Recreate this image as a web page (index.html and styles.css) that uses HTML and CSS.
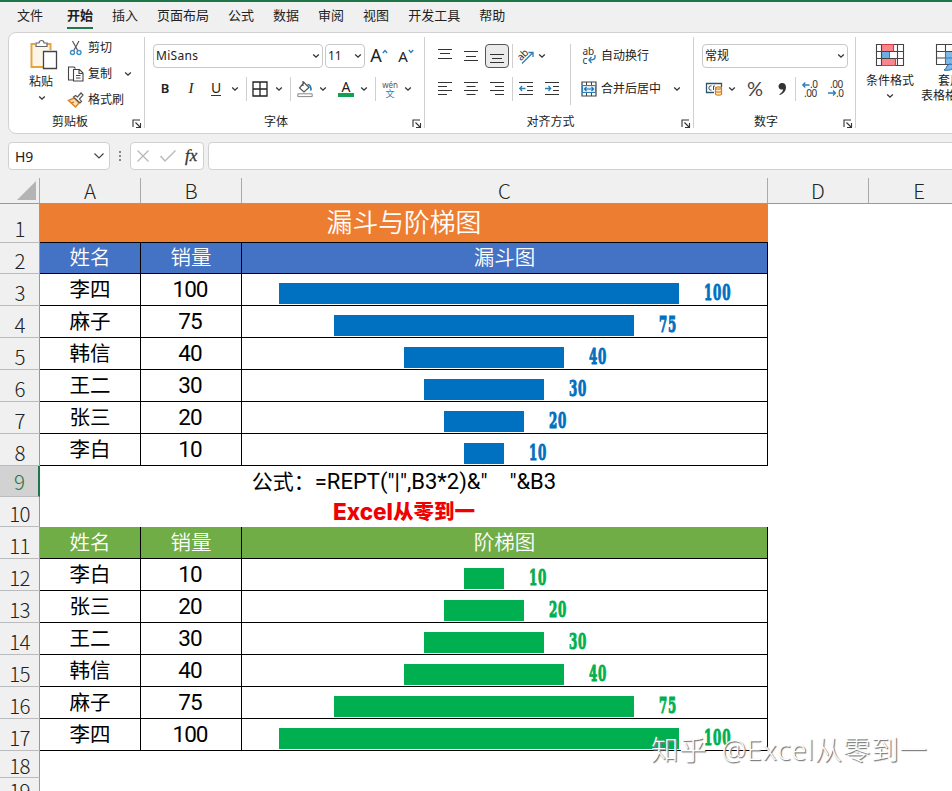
FILE: index.html
```html
<!DOCTYPE html>
<html lang="zh-CN">
<head>
<meta charset="utf-8">
<title>漏斗与阶梯图</title>
<link rel="stylesheet" href="styles.css">
</head>
<body>
<svg class="defs" aria-hidden="true">
  <symbol id="chev" viewBox="0 0 8 6"><path d="M1.2 1.5 4 4.2 6.8 1.5" fill="none" stroke="#333" stroke-width="1.3"/></symbol>
  <symbol id="launch" viewBox="0 0 10 10"><path d="M1 8V1h7M3.5 3.5 8 8M8.5 4v4.5H4" fill="none" stroke="#333" stroke-width="1.1"/></symbol>
</svg>
<div class="app">
  <nav class="tabs">
    <span class="first">文件</span><span class="active">开始</span><span>插入</span><span>页面布局</span><span>公式</span><span>数据</span><span>审阅</span><span>视图</span><span>开发工具</span><span>帮助</span>
  </nav>
  <div class="ribbon">
    <section class="group clip">
      <div class="tools">
        <div class="paste">
          <svg width="30" height="32" viewBox="0 0 30 32"><path d="M4 5h16v6h-6v16H4z" fill="#fdf6e8"/><path d="M6 5H2.500V28H14" fill="none" stroke="#e8a33d" stroke-width="2"/><path d="M18 5h3.500v6" fill="none" stroke="#e8a33d" stroke-width="2"/><path d="M7 7.500V4h3a2.500 2.500 0 0 1 5 0h3v3.500z" fill="#fff" stroke="#666" stroke-width="1.200"/><path d="M14.500 12.500h13v17h-13z" fill="#fff" stroke="#444" stroke-width="1.300"/></svg>
          <span>粘贴</span>
          <svg class="chev"><use href="#chev"/></svg>
        </div>
        <div class="cliplist">
          <div><svg width="18" height="18" viewBox="0 0 18 18"><path d="M5.500 2 11 12M12 2 6.500 12" stroke="#555" stroke-width="1.200"/><g fill="none" stroke="#3b91c8" stroke-width="1.400"><circle cx="5.500" cy="13.500" r="2"/><circle cx="12" cy="13.500" r="2"/></g></svg><span>剪切</span></div>
          <div><svg width="18" height="18" viewBox="0 0 18 18"><path d="M6 15H1.500V2H7l1.500 1.500M6.500 4.500h6l3.500 3.500v8H6.500zM12 4.500V8.500h4M9 10.500h4.500M9 13h4.500" fill="none" stroke="#444" stroke-width="1.100"/></svg><span>复制</span><svg class="chev far"><use href="#chev"/></svg></div>
          <div><svg width="18" height="18" viewBox="0 0 18 18"><path d="M1.500 9.500 7 7l5 5-3.500 4z" fill="#fbe0b8" stroke="#df7f20" stroke-width="1.400"/><path d="m4 12 3-1" stroke="#df7f20" stroke-width="1.400"/><path d="m6.500 6 6.500 6 1.500-1.500-2-2.500L16 4 14 2l-3.500 4L8.500 4.500z" fill="#fff" stroke="#555" stroke-width="1.200"/></svg><span>格式刷</span></div>
        </div>
      </div>
      <div class="caption"><span>剪贴板</span><svg class="launch"><use href="#launch"/></svg></div>
    </section>

    <section class="group font">
      <div class="tools col">
        <div class="line">
          <div class="combo name"><span>MiSans</span><svg class="chev"><use href="#chev"/></svg></div>
          <div class="combo size"><span>11</span><svg class="chev"><use href="#chev"/></svg></div>
          <div class="slot w28 up"><span class="big">A</span><svg width="6" height="5" viewBox="0 0 6 5"><path d="M.8 4 3 1.500 5.200 4" fill="none" stroke="#2b7fb8" stroke-width="1.300"/></svg></div>
          <div class="slot w26 up"><span class="mid">A</span><svg width="6" height="5" viewBox="0 0 6 5"><path d="M.8 1 3 3.500 5.200 1" fill="none" stroke="#2b7fb8" stroke-width="1.300"/></svg></div>
        </div>
        <div class="line">
          <div class="slot w26 b">B</div><div class="slot w26 i">I</div><div class="slot w24 u"><span>U</span></div>
          <div class="slot w14"><svg class="chev"><use href="#chev"/></svg></div>
          <div class="slot w8"><i class="sep"></i></div>
          <div class="slot w20"><svg width="16" height="16" viewBox="0 0 16 16"><path d="M1 1h14v14H1zM8 1v14M1 8h14" fill="none" stroke="#222" stroke-width="1.300"/></svg></div>
          <div class="slot w18"><svg class="chev"><use href="#chev"/></svg></div>
          <div class="slot w4"><i class="sep"></i></div>
          <div class="slot w26"><svg width="16" height="18" viewBox="0 0 16 18"><path d="m7 2.500 5 5-5 4.500L2.500 8zM6 1v5" fill="none" stroke="#555" stroke-width="1.200"/><path d="M10.500 4.500c3 0 3.500 2 3.500 6" fill="none" stroke="#1b75b5" stroke-width="1.600"/><path d="M.8 13.800h14.400v2.800H.8z" fill="#fff" stroke="#888"/></svg></div>
          <div class="slot w10"><svg class="chev"><use href="#chev"/></svg></div>
          <div class="slot w4"></div>
          <div class="slot w28 color"><span>A</span></div>
          <div class="slot w8"><svg class="chev"><use href="#chev"/></svg></div>
          <div class="slot w14"><i class="sep"></i></div>
          <div class="slot w16 wen"><span>wén</span><b>文</b></div>
          <div class="slot w20"><svg class="chev"><use href="#chev"/></svg></div>
        </div>
      </div>
      <div class="caption"><span>字体</span><svg class="launch"><use href="#launch"/></svg></div>
    </section>

    <section class="group align">
      <div class="tools">
        <div class="col left">
          <div class="line">
            <div class="slot w26"><svg width="14" height="14" viewBox="0 0 14 14"><path d="M0 .5h14M2 4.500h10M0 9.500h14" class="ln"/></svg></div>
            <div class="slot w26"><svg width="14" height="14" viewBox="0 0 14 14"><path d="M0 2.500h14M2 7.500h10M0 11.500h14" class="ln"/></svg></div>
            <div class="slot w26"><div class="pressed"><svg width="14" height="14" viewBox="0 0 14 14"><path d="M0 5.500h14M2 9.500h10M0 13.500h14" class="ln"/></svg></div></div>
            <div class="slot w4"><i class="sep"></i></div>
            <div class="slot w24"><svg width="18" height="18" viewBox="0 0 18 18"><text x="0" y="11" transform="rotate(-45 6 8)" class="abr">ab</text><path d="M5 16.500 16 5.500M11.500 5.500H16V10" fill="none" stroke="#2b7fb8" stroke-width="1.300"/></svg></div>
            <div class="slot w8"><svg class="chev"><use href="#chev"/></svg></div>
          </div>
          <div class="line">
            <div class="slot w26"><svg width="14" height="14" viewBox="0 0 14 14"><path d="M0 .5h14M0 4.500h9M0 8.500h14M0 12.500h9" class="ln"/></svg></div>
            <div class="slot w26"><svg width="14" height="14" viewBox="0 0 14 14"><path d="M0 .5h14M2.500 4.500h9M0 8.500h14M2.500 12.500h9" class="ln"/></svg></div>
            <div class="slot w26"><svg width="14" height="14" viewBox="0 0 14 14"><path d="M0 .5h14M5 4.500h9M0 8.500h14M5 12.500h9" class="ln"/></svg></div>
            <div class="slot w4"><i class="sep"></i></div>
            <div class="slot w24"><svg width="15" height="14" viewBox="0 0 15 14"><path d="M0 .5h14M8 4.500h6M8 8.500h6M0 12.500h14" class="ln"/><path d="M6.500 6.500H.8M3 4 .8 6.500 3 9" fill="none" stroke="#2b7fb8" stroke-width="1.300"/></svg></div>
            <div class="slot w28"><svg width="15" height="14" viewBox="0 0 15 14"><path d="M0 .5h14M8 4.500h6M8 8.500h6M0 12.500h14" class="ln"/><path d="M0 6.500h5.700M3.500 4l2.200 2.500L3.500 9" fill="none" stroke="#2b7fb8" stroke-width="1.300"/></svg></div>
          </div>
        </div>
        <i class="sep tall"></i>
        <div class="col wrapcol">
          <div class="line"><svg width="16" height="18" viewBox="0 0 16 18"><text x="1.500" y="8" class="abc">ab</text><text x="1.500" y="16.500" class="abc">c</text><path d="M14 8v2.500c0 2-1.500 2.500-6 2.500M10.500 10 8 13l2.500 3" fill="none" stroke="#2b7fb8" stroke-width="1.400"/></svg><span>自动换行</span></div>
          <div class="line"><svg width="16" height="16" viewBox="0 0 16 16"><path d="M1 1h14v14H1z" fill="#fff" stroke="#444" stroke-width="1.200"/><path d="M1.500 4.500h13v7h-13z" fill="#dceefa" stroke="#2b7fb8"/><path d="M5.500 1v3M10.500 1v3M5.500 12v3M10.500 12v3" stroke="#444"/><path d="M3.500 8h9M5.500 6l-2 2 2 2M10.500 6l2 2-2 2" fill="none" stroke="#1b6ca8" stroke-width="1.100"/></svg><span>合并后居中</span><svg class="chev merge"><use href="#chev"/></svg></div>
        </div>
      </div>
      <div class="caption"><span>对齐方式</span><svg class="launch"><use href="#launch"/></svg></div>
    </section>

    <section class="group number">
      <div class="tools col">
        <div class="line"><div class="combo fmt"><span>常规</span><svg class="chev"><use href="#chev"/></svg></div></div>
        <div class="line">
          <div class="slot w24"><svg width="17" height="14" viewBox="0 0 17 14"><path d="M15.500 5V1.500h-15v9H8" fill="none" stroke="#31556b" stroke-width="1.300"/><path d="M5.500 4H4C2.500 4 2.500 8 4 8h1.500M9 4H7.500v4" fill="none" stroke="#31556b"/><path d="M9.500 6v6c0 1.500 6 1.500 6 0V6c0-1.500-6-1.500-6 0 0 1.500 6 1.500 6 0M9.500 9c0 1.500 6 1.500 6 0" fill="#fdebd0" stroke="#d97a14" stroke-width="1.200"/></svg></div>
          <div class="slot w12"><svg class="chev"><use href="#chev"/></svg></div>
          <div class="slot w34 pct">%</div>
          <div class="slot w20"><svg width="9" height="14" viewBox="0 0 9 14"><path d="M4.300 1a3.300 3.300 0 1 0 .8 6.300C5 9.500 3.500 11 1.300 12.200l.5.900C5.500 11.700 8 9 8 5.200 8 2.500 6.500 1 4.300 1z" fill="#333"/></svg></div>
          <div class="slot w6"><i class="sep"></i></div>
          <div class="slot w24"><svg width="16" height="18" viewBox="0 0 16 18"><text x="8" y="8" class="dec">.0</text><text x="2" y="17" class="dec">.00</text><path d="M7.500 5H.8M3.300 2.500.8 5l2.500 2.500" fill="none" stroke="#2b7fb8" stroke-width="1.300"/></svg></div>
          <div class="slot w28"><svg width="16" height="18" viewBox="0 0 16 18"><text x="2" y="8" class="dec">.00</text><text x="8" y="17" class="dec">.0</text><path d="M0 13h7.500M5 10.500 7.500 13 5 15.500" fill="none" stroke="#2b7fb8" stroke-width="1.300"/></svg></div>
        </div>
      </div>
      <div class="caption"><span>数字</span><svg class="launch"><use href="#launch"/></svg></div>
    </section>

    <section class="styles">
      <div class="bigbtn cond"><svg width="30" height="24" viewBox="0 0 30 24"><path d="M1.500 1.500h27v21h-27z" fill="#fff"/><path d="M6.500 1.500h12v7h-12zM6.500 15.500h14v7h-14z" fill="#f8868c" stroke="#d63a42"/><path d="M6.500 8.500h8v7h-8z" fill="#6bb0e4" stroke="#2b7fb8"/><path d="M1.500 1.500h27v21h-27zM1.500 8.500h27M1.500 15.500h27M6.500 1.500v21M22.500 1.500v21" fill="none" stroke="#444" stroke-width="1.100"/><path d="M6.500 1.500h12v7M6.500 22.500h14v-7" fill="none" stroke="#d63a42" stroke-width="1.200"/></svg><span>条件格式</span><svg class="chev"><use href="#chev"/></svg></div>
      <div class="bigbtn table"><svg width="30" height="28" viewBox="0 0 30 28"><path d="M1.500 1.500h27v20h-27z" fill="#fff"/><path d="M10.500 8.500h18v13h-18z" fill="#7db9e8"/><path d="M1.500 1.500h27v20h-27zM1.500 8.500h27M1.500 15h9M10.500 1.500v20M19.500 1.500v20" fill="none" stroke="#444" stroke-width="1.100"/><path d="M10.500 15h18M10.500 8.500v13" stroke="#2b7fb8"/><path d="M9 27c3-1 2-5 6-6 3 0 4 3 2 5-2 1.500-5 1.500-8 1z" fill="#7db9e8" stroke="#1b6ca8"/></svg><span>套用</span><span>表格格式</span></div>
    </section>
  </div>

  <div class="formula">
    <div class="namebox"><span>H9</span><svg width="12" height="8" viewBox="0 0 12 8"><path d="m1.500 1.500 4.500 4.500 4.500-4.500" fill="none" stroke="#444" stroke-width="1.200"/></svg></div>
    <svg class="dots" width="4" height="14" viewBox="0 0 4 14"><path d="M1 2h2v2H1zM1 6h2v2H1zM1 10h2v2H1z" fill="#888"/></svg>
    <div class="fxbox"><svg width="12" height="12" viewBox="0 0 12 12"><path d="m.5.5 11 11m0-11-11 11" stroke="#b8b8b8" stroke-width="1.300"/></svg><svg width="16" height="12" viewBox="0 0 16 12"><path d="m.5 6 4.500 5L15.500.5" fill="none" stroke="#b8b8b8" stroke-width="1.400"/></svg><span>fx</span></div>
    <div class="input"></div>
  </div>

  <div class="sheet">
    <div class="row head"><div class="corner"><svg width="19" height="19" viewBox="0 0 19 19"><path d="M19 0v19H0z" fill="#b4b4b4"/></svg></div><div>A</div><div>B</div><div>C</div><div>D</div><div>E</div></div>
    <div class="row r1"><div class="num">1</div><div class="title">漏斗与阶梯图</div></div>
    <div class="row r2 blue"><div class="num">2</div><div class="cell">姓名</div><div class="cell">销量</div><div class="cell">漏斗图</div></div>
    <div class="row funnel"><div class="num">3</div><div class="cell">李四</div><div class="cell">100</div><div class="cell chart"><i class="bar" style="width:400px"></i><b class="v3"><span>100</span></b></div></div>
    <div class="row funnel"><div class="num">4</div><div class="cell">麻子</div><div class="cell">75</div><div class="cell chart"><i class="bar" style="width:300px"></i><b><span>75</span></b></div></div>
    <div class="row funnel"><div class="num">5</div><div class="cell">韩信</div><div class="cell">40</div><div class="cell chart"><i class="bar" style="width:160px"></i><b><span>40</span></b></div></div>
    <div class="row funnel"><div class="num">6</div><div class="cell">王二</div><div class="cell">30</div><div class="cell chart"><i class="bar" style="width:120px"></i><b><span>30</span></b></div></div>
    <div class="row funnel"><div class="num">7</div><div class="cell">张三</div><div class="cell">20</div><div class="cell chart"><i class="bar" style="width:80px"></i><b><span>20</span></b></div></div>
    <div class="row funnel"><div class="num">8</div><div class="cell">李白</div><div class="cell">10</div><div class="cell chart"><i class="bar" style="width:40px"></i><b><span>10</span></b></div></div>
    <div class="row r9"><div class="num sel">9</div><div class="merged"><span>公式：</span><span class="code">=REPT("|",B3*2)&amp;"    "&amp;B3</span></div></div>
    <div class="row r10"><div class="num">10</div><div class="merged red"><span class="latin">Excel</span><span>从零到一</span></div></div>
    <div class="row green"><div class="num">11</div><div class="cell">姓名</div><div class="cell">销量</div><div class="cell">阶梯图</div></div>
    <div class="row stair"><div class="num">12</div><div class="cell">李白</div><div class="cell">10</div><div class="cell chart"><i class="bar" style="width:40px"></i><b><span>10</span></b></div></div>
    <div class="row stair"><div class="num">13</div><div class="cell">张三</div><div class="cell">20</div><div class="cell chart"><i class="bar" style="width:80px"></i><b><span>20</span></b></div></div>
    <div class="row stair"><div class="num">14</div><div class="cell">王二</div><div class="cell">30</div><div class="cell chart"><i class="bar" style="width:120px"></i><b><span>30</span></b></div></div>
    <div class="row stair"><div class="num">15</div><div class="cell">韩信</div><div class="cell">40</div><div class="cell chart"><i class="bar" style="width:160px"></i><b><span>40</span></b></div></div>
    <div class="row stair"><div class="num">16</div><div class="cell">麻子</div><div class="cell">75</div><div class="cell chart"><i class="bar" style="width:300px"></i><b><span>75</span></b></div></div>
    <div class="row stair"><div class="num">17</div><div class="cell">李四</div><div class="cell">100</div><div class="cell chart"><i class="bar" style="width:400px"></i><b class="v3"><span>100</span></b></div></div>
    <div class="row r18"><div class="num">18</div></div>
    <div class="row r19"><div class="num">19</div></div>
  </div>
  <div class="watermark">知乎 @Excel从零到一</div>
</div>
</body>
</html>
```
FILE: styles.css
```css
* { box-sizing: border-box; }
body { margin: 0; background: #f0f0f0; font: 12px "Noto Sans", "Noto Sans CJK SC", sans-serif; color: #222; }
svg { display: block; flex: none; overflow: visible; }
.defs { position: absolute; width: 0; height: 0; }
.app { position: relative; width: 952px; height: 791px; overflow: hidden; }

.tabs { display: flex; gap: 19px; height: 32px; padding: 2px 0 0 17px; border-top: 2px solid #1e7548; font-size: 13px; line-height: 23px; white-space: nowrap; }
.tabs span { height: 25px; }
.tabs .first { margin-right: 5px; }
.tabs .active { font-weight: bold; border-bottom: 2px solid #1e7548; }

.ribbon { display: flex; margin-left: 8px; width: 1000px; height: 102px; background: #fff; border: 1px solid #d2d2d2; border-radius: 8px; line-height: 16px; white-space: nowrap; }
.group { display: flex; flex-direction: column; flex: none; height: 91px; margin-top: 4px; border-right: 1px solid #d0d0d0; }
.clip { width: 136px; }
.font { width: 280px; }
.align { width: 269px; }
.number { width: 162px; }
.tools { display: flex; height: 75px; flex: none; }
.col { display: flex; flex-direction: column; gap: 9px; padding-top: 7px; }
.line { display: flex; align-items: center; height: 24px; }
.font .tools { padding-left: 7px; }
.number .tools { padding-left: 8px; }
.caption { display: flex; justify-content: center; height: 16px; position: relative; line-height: 20px; }
.clip .caption { padding-right: 13px; }
.font .caption { padding-right: 17px; }
.align .caption { padding-right: 17px; }
.number .caption { padding-right: 17px; }
.launch { position: absolute; right: 2px; bottom: -1px; width: 10px; height: 10px; }
.chev { width: 8px; height: 6px; }

.paste { display: flex; flex-direction: column; align-items: center; width: 30px; margin-left: 20px; padding-top: 2px; }
.paste span { margin: 3px 6px 5px 0; }
.paste .chev { margin-right: 4px; }
.cliplist { display: flex; flex-direction: column; gap: 8px; padding-top: 2px; margin-left: 8px; }
.cliplist > div { display: flex; align-items: center; height: 18px; gap: 3px; }
.far { margin-left: 9px; }

.combo { display: flex; align-items: center; justify-content: space-between; height: 24px; border: 1px solid #c8c8c8; border-radius: 4px; padding: 0 2px; flex: none; }
.name { width: 170px; margin-left: 1px; letter-spacing: .3px; }
.size { width: 40px; margin-left: 2px; }
.fmt { width: 146px; }
.slot { display: flex; align-items: center; justify-content: center; flex: none; height: 24px; }
.w4 { width: 4px; } .w6 { width: 6px; } .w8 { width: 8px; } .w10 { width: 10px; } .w12 { width: 12px; } .w14 { width: 14px; } .w16 { width: 16px; } .w18 { width: 18px; }
.w20 { width: 20px; } .w24 { width: 24px; } .w26 { width: 26px; } .w28 { width: 28px; } .w34 { width: 34px; }
.sep { width: 1px; height: 24px; background: #d0d0d0; flex: none; }
.tall { height: 61px; margin: 7px 0 0 4px; }
.up { padding-bottom: 2px; }
.up svg { margin-bottom: 8px; }
.big { font-size: 18px; }
.mid { font-size: 15px; padding-top: 2px; }
.b { font-weight: 600; font-size: 13px; padding-bottom: 2px; }
.i { font: italic 15px "Liberation Serif", serif; padding-bottom: 1px; }
.u { font-size: 14px; padding-bottom: 1px; }
.u span { border-bottom: 1px solid #333; line-height: 14px; }
.color { padding-bottom: 1px; }
.color span { width: 16px; border-bottom: 4px solid #12a150; text-align: center; font-size: 14px; line-height: 13px; }
.wen { flex-direction: column; line-height: 8px; font-size: 8px; color: #555; }
.wen b { font-size: 9px; font-weight: normal; color: #2b7fb8; line-height: 9px; }
.ln { fill: none; stroke: #333; stroke-width: 1.1; }
.left { padding-left: 7px; }
.pressed { display: flex; align-items: center; justify-content: center; width: 24px; height: 24px; border: 1px solid #555; border-radius: 4px; background: #ebebeb; }
.abr { font-size: 10px; fill: #333; }
.abc { font-size: 10px; fill: #333; }
.wrapcol { padding-left: 10px; }
.wrapcol span { margin-left: 4px; }
.merge { margin-left: 12px; }
.pct { font: 400 20px Lato, sans-serif; color: #444; padding-bottom: 2px; }
.dec { font-size: 10px; fill: #333; letter-spacing: -.5px; }
.styles { display: flex; padding-top: 10px; }
.bigbtn { display: flex; flex-direction: column; align-items: center; flex: none; }
.cond { margin-left: 10px; width: 48px; }
.cond span { margin: 6px 0 4px; }
.table { margin-left: 7px; width: 58px; line-height: 15px; }
.table svg { margin-bottom: 2px; }
.table span:last-child { align-self: flex-start; }

.formula { display: flex; align-items: center; height: 44px; padding-left: 8px; }
.formula > div { display: flex; align-items: center; flex: none; height: 28px; background: #fff; border: 1px solid #d0d0d0; border-radius: 4px; }
.formula .namebox { width: 102px; justify-content: space-between; padding: 0 4px 0 6px; font-size: 14px; }
.dots { margin: 0 8px; }
.formula .fxbox { width: 74px; padding-left: 6px; gap: 11px; }
.fxbox span { font: italic 400 17px "Liberation Serif", serif; color: #333; -webkit-text-stroke: .3px #333; margin-left: -2px; }
.formula .input { width: 800px; margin-left: 4px; }

.sheet { height: 613px; background: #fff; font-size: 20.5px; }
.row { display: grid; grid-template-columns: 40px 101px 101px 526px 101px 101px; height: 32px; }
.head { height: 26px; background: #f0f0f0; border-bottom: 1px solid #999; font-weight: 300; font-family: "Noto Sans CJK SC", sans-serif; }
.head > div { display: flex; align-items: center; justify-content: center; height: 25px; border-right: 1px solid #aaa; padding-bottom: 1px; }
.head .corner { justify-content: flex-end; padding: 0 3px 0 0; }
.num { display: flex; align-items: flex-end; justify-content: center; background: #f0f0f0; border-right: 1px solid #999; border-bottom: 1px solid #bbb; padding: 0 0 1px; font: 300 20.5px/24px "Noto Sans CJK SC", sans-serif; letter-spacing: -.8px; overflow: hidden; color: #222; }
.sel { background: #d2d2d2; color: #1e7548; border-right: 2px solid #1e7548; padding-bottom: 3px; }
.r1 { height: 39px; }
.r1 .num { padding-bottom: 2px; }
.title { grid-column: 2 / 5; display: flex; align-items: center; justify-content: center; background: #ed7d31; color: #fff; border-bottom: 1px solid #000; font: 350 25.8px/34px "Noto Sans CJK SC", sans-serif; padding-bottom: 4px; }
.r2 { height: 31px; }
.cell { display: flex; align-items: center; justify-content: center; border-right: 1px solid #000; border-bottom: 1px solid #000; font: 400 20.5px/30px Roboto, "Noto Sans CJK SC", sans-serif; color: #000; overflow: hidden; }
.cell:nth-child(3) { font-size: 22.5px; letter-spacing: -1px; padding: 0 2px 2px 0; }
.blue .cell.cell, .green .cell.cell { color: #fff; font-size: 20.5px; letter-spacing: 0; font-weight: 350; padding: 0; }
.blue .cell { background: #4472c4; }
.green .cell { background: #70ad47; }
.funnel .chart { color: #0070c0; }
.stair .chart { color: #00b050; }
.chart { align-items: flex-start; padding-top: 9px; }
.bar { height: 21px; background: currentColor; flex: none; }
.chart b { width: 16px; height: 18px; margin-left: 25px; flex: none; }
.chart .v3 { width: 26px; }
.chart b span { display: block; width: max-content; font: bold 22px/18px "DejaVu Serif", serif; -webkit-text-stroke: 1.1px currentColor; letter-spacing: 1.5px; transform: scaleX(.54); transform-origin: 0 0; }
.r9 { height: 31px; }
.r10 { height: 30px; }
.merged { grid-column: 2 / 5; display: flex; align-items: center; justify-content: center; color: #000; white-space: pre; font-family: Roboto, "Noto Sans CJK SC", sans-serif; font-size: 21px; line-height: 30px; }
.code { font-size: 22px; }
.red { color: #f00000; font-weight: 900; font-size: 20.5px; }
.latin { font: 800 22.5px/30px Inter, sans-serif; }
.r18 { height: 27px; }
.r18 .num { padding-bottom: 0; }
.r19 { height: 27px; }
.r19 .num { align-items: flex-start; }
.watermark { position: absolute; left: 651px; top: 730px; font: 300 27.300px/40px "Open Sans", "Noto Sans CJK SC", sans-serif; word-spacing: 6px; letter-spacing: 1px; color: #fff; text-shadow: 1px 1px 1px #777, 1px 1px 1px #aaa; white-space: nowrap; }
```
